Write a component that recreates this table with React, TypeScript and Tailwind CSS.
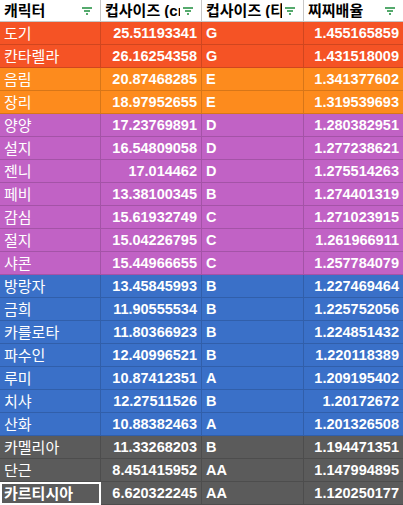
const rows: [string, string, string, string, string][] = [
  ['도기', '25.51193341', 'G', '1.455165859', 'bg-[#f55325]'],
  ['칸타렐라', '26.16254358', 'G', '1.431518009', 'bg-[#f55325]'],
  ['음림', '20.87468285', 'E', '1.341377602', 'bg-[#fd8b1d]'],
  ['장리', '18.97952655', 'E', '1.319539693', 'bg-[#fd8b1d]'],
  ['양양', '17.23769891', 'D', '1.280382951', 'bg-[#c162c5]'],
  ['설지', '16.54809058', 'D', '1.277238621', 'bg-[#c162c5]'],
  ['젠니', '17.014462', 'D', '1.275514263', 'bg-[#c162c5]'],
  ['페비', '13.38100345', 'B', '1.274401319', 'bg-[#c162c5]'],
  ['감심', '15.61932749', 'C', '1.271023915', 'bg-[#c162c5]'],
  ['절지', '15.04226795', 'C', '1.261966911', 'bg-[#c162c5]'],
  ['샤콘', '15.44966655', 'C', '1.257784079', 'bg-[#c162c5]'],
  ['방랑자', '13.45845993', 'B', '1.227469464', 'bg-[#3a70c8]'],
  ['금희', '11.90555534', 'B', '1.225752056', 'bg-[#3a70c8]'],
  ['카를로타', '11.80366923', 'B', '1.224851432', 'bg-[#3a70c8]'],
  ['파수인', '12.40996521', 'B', '1.220118389', 'bg-[#3a70c8]'],
  ['루미', '10.87412351', 'A', '1.209195402', 'bg-[#3a70c8]'],
  ['치샤', '12.27511526', 'B', '1.20172672', 'bg-[#3a70c8]'],
  ['산화', '10.88382463', 'A', '1.201326508', 'bg-[#3a70c8]'],
  ['카멜리아', '11.33268203', 'B', '1.194471351', 'bg-[#5b5b5b]'],
  ['단근', '8.451415952', 'AA', '1.147994895', 'bg-[#5b5b5b]'],
  ['카르티시아', '6.620322245', 'AA', '1.120250177', 'bg-[#5b5b5b]'],
]

function FilterIcon() {
  return (
    <svg width="12" height="10" viewBox="0 0 12 10" className="shrink-0">
      <path d="M1 2h10M3 5h6M5 8h2" stroke="#1e8e3e" strokeWidth="1.4" />
    </svg>
  )
}

// header labels are clipped by the filter icon, like in the sheet
function HeaderCell({ label }: { label: string }) {
  return (
    <div className="h-[22px] flex items-center gap-0.5 pl-1 pr-[7px] border-r border-b border-[#c7c7c7] bg-white overflow-hidden">
      <span className="flex-1 overflow-hidden whitespace-nowrap font-bold text-black text-[15px]">{label}</span>
      <FilterIcon />
    </div>
  )
}

export default function App() {
  return (
    <div
      className="w-[403px] h-[505px] overflow-hidden bg-white text-[14.5px] leading-none"
      style={{ fontFamily: '"Liberation Sans", Arial, "Noto Sans CJK KR", sans-serif' }}
    >
      <div className="grid grid-cols-[101px_101px_102px_100px]">
        <HeaderCell label="캐릭터" />
        <HeaderCell label="컵사이즈 (cm)" />
        <HeaderCell label="컵사이즈 (티어)" />
        <HeaderCell label="찌찌배율" />

        {rows.map(([name, cm, tier, ratio, bg], i) => {
          const last = i === rows.length - 1
          const cell = `h-[23px] flex items-center pt-px border-r border-b border-black/15 text-white ${bg}`
          return (
            <div key={name} className="contents">
              <div className={`${cell} px-1 text-[15px] ${last ? 'font-bold outline-2 outline-white -outline-offset-2' : ''}`}>
                {name}
              </div>
              <div className={`${cell} justify-end px-1 font-bold`}>{cm}</div>
              <div className={`${cell} px-1 font-bold`}>{tier}</div>
              <div className={`${cell} justify-end px-1 font-bold`}>{ratio}</div>
            </div>
          )
        })}
      </div>
    </div>
  )
}
